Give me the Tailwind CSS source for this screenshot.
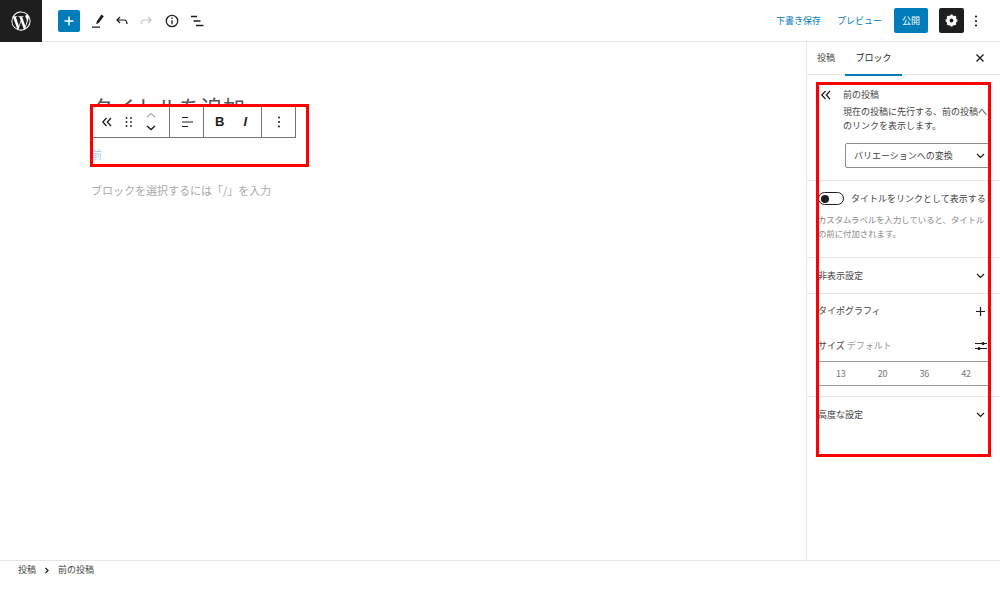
<!DOCTYPE html>
<html lang="ja">
<head>
  <meta charset="UTF-8" />
  <title>投稿を編集</title>
  <script src="https://cdn.jsdelivr.net/npm/@tailwindcss/browser@4"></script>
</head>
<body class="bg-white text-[#1e1e1e] h-[600px] w-[1000px] overflow-hidden flex flex-col relative font-['Noto_Sans_CJK_JP','Noto_Sans',sans-serif] text-[9px]">

  <!-- top bar -->
  <header class="h-[42px] shrink-0 flex items-center border-b border-[#e6e6e6]">
    <div class="w-[42px] h-[42px] bg-[#1e1e1e] flex items-center justify-center">
      <svg width="22" height="22" viewBox="0 0 24 24" fill="#fff"><path d="M12 1.5a10.5 10.5 0 1 0 0 21 10.5 10.5 0 0 0 0-21zM2.6 12c0-1.4.3-2.7.8-3.8l4.5 12.3A9.4 9.4 0 0 1 2.600 12zm9.400 9.400c-.9 0-1.800-.1-2.700-.4l2.800-8.200 2.900 7.900.1.100c-.9.400-2 .6-3.100.6zm1.300-13.800c.6 0 1.100-.1 1.100-.1.500-.1.400-.9-.1-.8 0 0-1.500.1-2.500.1-.9 0-2.400-.1-2.400-.1-.5 0-.6.800-.1.800 0 0 .5.100 1 .1l1.400 3.900-2 6-3.300-9.900c.6 0 1.100-.1 1.100-.1.500-.1.400-.9-.1-.8 0 0-1.500.1-2.500.1h-.6A9.400 9.400 0 0 1 18.400 5.100h-.1c-.9 0-1.600.8-1.600 1.700 0 .8.500 1.400.9 2.100.4.600.7 1.400.7 2.500 0 .8-.3 1.700-.7 3l-.9 3.100zm3.400 12.500l2.900-8.300c.5-1.300.7-2.400.7-3.300 0-.3 0-.6-.1-.9a9.400 9.400 0 0 1-3.500 12.500z"/></svg>
    </div>
    <div class="flex items-center ml-4">
      <button class="w-[22px] h-[22px] bg-[#007cba] rounded-[2px] flex items-center justify-center">
        <svg width="12" height="12" viewBox="0 0 12 12" stroke="#fff" stroke-width="1.500"><path d="M6 1.500v9M1.500 6h9"/></svg>
      </button>
      <svg class="ml-[10px]" width="16" height="16" viewBox="0 0 16 16" fill="#1e1e1e"><path d="M11.500 1.500l2.300 1.800-4.600 6.300q-1 1.200-3 1.400.1-1.900 1-3.200zM2 13.500h8v1.300H2z"/></svg>
      <svg class="ml-[8px]" width="16" height="16" viewBox="0 0 16 16" fill="none" stroke="#1e1e1e" stroke-width="1.200"><path d="M6 4L3 7l3 3M3 7h7c2 0 3 1.300 3 4"/></svg>
      <svg class="ml-[8px]" width="16" height="16" viewBox="0 0 16 16" fill="none" stroke="#c4c4c4" stroke-width="1.200"><path d="M10 4l3 3-3 3M13 7H6c-2 0-3 1.300-3 4"/></svg>
      <svg class="ml-[10px]" width="16" height="16" viewBox="0 0 16 16" fill="none" stroke="#1e1e1e" stroke-width="1.300"><circle cx="8" cy="8" r="5.700"/><path d="M8 7.200v4M8 4.600v1.500"/></svg>
      <svg class="ml-[10px]" width="15" height="16" viewBox="0 0 15 16" stroke="#1e1e1e" stroke-width="1.300"><path d="M1 3.500h6M3.500 8h7M6 12.500h7.500"/></svg>
    </div>
    <div class="ml-auto flex items-center">
      <span class="text-[#007cba]">下書き保存</span>
      <span class="text-[#007cba] ml-[16px]">プレビュー</span>
      <button class="ml-[12px] w-[34px] h-[25px] bg-[#007cba] rounded-[2px] text-white">公開</button>
      <button class="ml-[11px] w-[25px] h-[25px] bg-[#1e1e1e] rounded-[2px] flex items-center justify-center">
        <svg width="13" height="13" viewBox="0 0 24 24" fill="none" stroke="#fff" stroke-width="6"><circle cx="12" cy="12" r="6.500"/><path stroke-width="4" d="M12 1v4M12 19v4M1 12h4M19 12h4M4.200 4.200l2.800 2.800M17 17l2.800 2.800M19.800 4.200L17 7M7 17l-2.800 2.800"/></svg>
      </button>
      <svg class="ml-[10px] mr-[22px]" width="4" height="14" viewBox="0 0 4 14" fill="#1e1e1e"><circle cx="2" cy="2.500" r="1.100"/><circle cx="2" cy="7" r="1.100"/><circle cx="2" cy="11.500" r="1.100"/></svg>
    </div>
  </header>

  <div class="flex flex-1 min-h-0">
    <!-- editor canvas -->
    <main class="flex-1 pl-[91px] pt-[49px] relative">
      <h1 class="text-[22px] leading-[30px] text-[#555]">タイトルを追加</h1>
      <p class="mt-[25px] text-[11px] leading-[16px] text-[#a9c9e4]">前</p>
      <p class="mt-[20px] text-[11px] leading-[16px] text-[#aaa]">ブロックを選択するには「/」を入力</p>

      <!-- block toolbar -->
      <div class="absolute left-[91px] top-[63px] w-[205px] h-[33px] bg-white border border-[#757575] flex items-center text-[#1e1e1e]">
        <div class="w-[78px] h-full flex items-center border-r border-[#757575] pl-[9px]">
          <svg width="12" height="12" viewBox="0 0 12 12" fill="none" stroke="#1e1e1e" stroke-width="1.300"><path d="M5.500 2L1.800 6l3.700 4M10 2L6.300 6l3.700 4"/></svg>
          <svg class="ml-[12px]" width="8" height="12" viewBox="0 0 8 12" fill="#1e1e1e"><circle cx="1.500" cy="2" r=".9"/><circle cx="6" cy="2" r=".9"/><circle cx="1.500" cy="6" r=".9"/><circle cx="6" cy="6" r=".9"/><circle cx="1.500" cy="10" r=".9"/><circle cx="6" cy="10" r=".9"/></svg>
          <svg class="ml-[12px]" width="12" height="22" viewBox="0 0 12 22" fill="none" stroke-width="1.200"><path stroke="#aaa" d="M2 6l4-3.500L10 6"/><path stroke="#1e1e1e" stroke-width="1.400" d="M2 15l4 3.500 4-3.500"/></svg>
        </div>
        <div class="w-[34px] h-full flex items-center justify-center border-r border-[#757575]">
          <svg width="14" height="12" viewBox="0 0 14 12" stroke="#1e1e1e" stroke-width="1.200"><path d="M2 1.500h6M2 6h11M2 10.500h6"/></svg>
        </div>
        <div class="w-[58px] h-full flex items-center border-r border-[#757575] text-[13px] pl-[11px]">
          <span class="font-bold font-['Liberation_Sans',sans-serif]">B</span>
          <span class="ml-[19px] italic font-bold font-['Liberation_Sans',sans-serif]">I</span>
        </div>
        <div class="w-[33px] flex items-center justify-center">
          <svg width="4" height="14" viewBox="0 0 4 14" fill="#1e1e1e"><circle cx="2" cy="2.500" r="1"/><circle cx="2" cy="7" r="1"/><circle cx="2" cy="11.500" r="1"/></svg>
        </div>
      </div>
    </main>

    <!-- settings sidebar -->
    <aside class="w-[194px] shrink-0 border-l border-[#e6e6e6] flex flex-col">
      <div class="h-[33px] flex items-center border-b border-[#e6e6e6] relative">
        <span class="ml-[10px] text-[#444]">投稿</span>
        <span class="ml-[10px] w-[57px] h-full flex items-center justify-center border-b-2 border-[#007cba] box-content pt-[1px]">ブロック</span>
        <svg class="ml-auto mr-[15px]" width="10" height="10" viewBox="0 0 10 10" stroke="#1e1e1e" stroke-width="1.400"><path d="M1.500 1.500l7 7M8.500 1.500l-7 7"/></svg>
      </div>

      <section class="h-[106px] border-b border-[#e6e6e6] pl-[13px] pt-[12px] relative">
        <div class="flex">
          <svg class="mt-[2px]" width="12" height="12" viewBox="0 0 12 12" fill="none" stroke="#1e1e1e" stroke-width="1.200"><path d="M5.500 2L1.800 6l3.700 4M10 2L6.300 6l3.700 4"/></svg>
          <div class="ml-[11px] text-[#444]">
            <p class="leading-[15px]">前の投稿</p>
            <p class="leading-[14px] mt-[3px] w-[146px]">現在の投稿に先行する、前の投稿へのリンクを表示します。</p>
          </div>
        </div>
        <div class="ml-[25px] mt-[10px] w-[145px] h-[25px] border border-[#8d8d8d] rounded-[2px] flex items-center pl-[8px] text-[#444]">
          バリエーションへの変換
          <svg class="ml-auto mr-[4px]" width="9" height="6" viewBox="0 0 9 6" fill="none" stroke="#1e1e1e" stroke-width="1.200"><path d="M1 1l3.500 3.500L8 1"/></svg>
        </div>
      </section>

      <section class="h-[77px] border-b border-[#e6e6e6] pl-[11px] pt-[11px]">
        <div class="flex items-center h-[13px]">
          <span class="w-[26px] h-[13px] rounded-full border border-[#1e1e1e] flex items-center pl-[2px]"><span class="w-[8px] h-[8px] rounded-full bg-[#1e1e1e]"></span></span>
          <span class="ml-[7px] text-[#444]">タイトルをリンクとして表示する</span>
        </div>
        <p class="mt-[7px] leading-[14px] whitespace-nowrap text-[8.4px] text-[#888]">カスタムラベルを入力していると、タイトル<br>の前に付加されます。</p>
      </section>

      <section class="h-[36px] border-b border-[#e6e6e6] pl-[11px] pr-[15px] flex items-center justify-between text-[#444]">
        <span>非表示設定</span>
        <svg width="9" height="6" viewBox="0 0 9 6" fill="none" stroke="#1e1e1e" stroke-width="1.200"><path d="M1 1l3.500 3.500L8 1"/></svg>
      </section>

      <section class="h-[103px] border-b border-[#e6e6e6] pl-[11px] text-[#444]">
        <div class="h-[34px] flex items-center justify-between pr-[15px]">
          <span>タイポグラフィ</span>
          <svg width="9" height="9" viewBox="0 0 9 9" stroke="#1e1e1e" stroke-width="1.200"><path d="M4.500 0v9M0 4.500h9"/></svg>
        </div>
        <div class="h-[33px] pt-[2px] flex items-center justify-between pr-[13px]">
          <span>サイズ <span class="text-[#999]">デフォルト</span></span>
          <svg width="12" height="10" viewBox="0 0 12 10" stroke="#1e1e1e" stroke-width="1.100" fill="#1e1e1e"><path d="M0 2.500h12M0 7.500h12"/><circle cx="8" cy="2.500" r="1"/><circle cx="4" cy="7.500" r="1"/></svg>
        </div>
        <div class="w-[170px] h-[25px] pl-[2px] pr-[1px] border-y border-[#9a9a9a] grid grid-cols-4 items-center text-center text-[#777]">
          <span>13</span><span>20</span><span>36</span><span>42</span>
        </div>
      </section>

      <section class="h-[36px] pl-[11px] pr-[15px] flex items-center justify-between text-[#444]">
        <span>高度な設定</span>
        <svg width="9" height="6" viewBox="0 0 9 6" fill="none" stroke="#1e1e1e" stroke-width="1.200"><path d="M1 1l3.500 3.500L8 1"/></svg>
      </section>
    </aside>
  </div>

  <!-- breadcrumb -->
  <footer class="h-[40px] shrink-0 border-t border-[#e6e6e6] flex items-start pt-[2px] pl-[18px] text-[#444]">
    <span>投稿</span>
    <svg class="mx-[8px] mt-[4px]" width="6" height="7" viewBox="0 0 6 7" fill="none" stroke="#1e1e1e" stroke-width="1.200"><path d="M1.500 1l2.500 2.500L1.500 6"/></svg>
    <span>前の投稿</span>
  </footer>

  <!-- red annotation boxes -->
  <div class="absolute left-[90px] top-[104px] w-[219px] h-[63px] border-[3px] border-[#ff0000]"></div>
  <div class="absolute left-[816px] top-[82px] w-[175px] h-[375px] border-[3px] border-[#ff0000]"></div>
</body>
</html>
